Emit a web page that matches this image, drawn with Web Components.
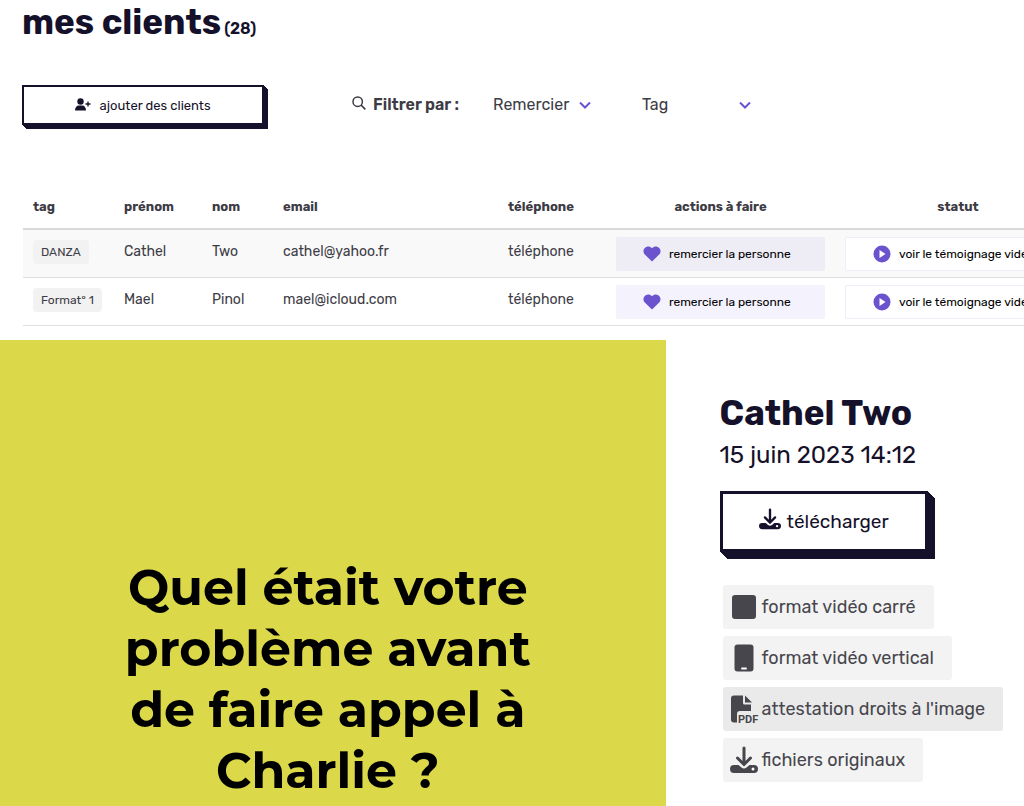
<!DOCTYPE html>
<html lang="fr">
<head>
<meta charset="utf-8">
<meta name="viewport" content="width=device-width, initial-scale=1">
<title>mes clients</title>
<style>
    body {
        --ink: #15112a;
        --text: #3d3c45;
        --violet: #6a53cc;
        margin: 0;
        background: white;
        color: var(--text);
        font-family: Rubik, Roboto, sans-serif;
    }
</style>
</head>
<body>
<clients-page></clients-page>

<script>
// all the icons, drawn with currentColor
const ICONS = {
    "user-plus": `<svg viewBox="0 0 16 14"><circle cx="5.500" cy="3.500" r="3.200" fill="currentColor"/><path d="M0 12.500c0-3 1.500-5 4-5h3c2.500 0 4 2 4 5z" fill="currentColor"/><path d="M13 3.500v5M10.500 6h5" stroke="currentColor" stroke-width="1.300" fill="none"/></svg>`,
    search: `<svg viewBox="0 0 14 14"><circle cx="5.700" cy="5.700" r="4.700" fill="none" stroke="currentColor" stroke-width="1.500"/><path d="M9 9l4.300 4.300" stroke="currentColor" stroke-width="1.700"/></svg>`,
    chevron: `<svg viewBox="0 0 12 8"><path d="M1 1.500l5 5 5-5" fill="none" stroke="currentColor" stroke-width="2"/></svg>`,
    heart: `<svg viewBox="0 0 18 16"><path d="M9 15.500L1.800 8.600C-2.500 3.500 4.500-2.500 9 2.200c4.500-4.700 11.500 1.300 7.200 6.400z" fill="currentColor"/></svg>`,
    play: `<svg viewBox="0 0 18 18"><circle cx="9" cy="9" r="8.500" fill="currentColor"/><path d="M6.500 5v8l6-4z" fill="white"/></svg>`,
    download: `<svg viewBox="0 0 28 28"><path d="M14 2v16M7.500 12l6.500 6.500 6.500-6.500" fill="none" stroke="currentColor" stroke-width="3" stroke-linecap="round"/><path d="M4 19h4.500l3 2.600q2.500 1.800 5 0l3-2.600H24a3.900 3.900 0 0 1 0 8H4a3.900 3.900 0 0 1 0-8z" fill="currentColor"/><circle cx="23" cy="23" r="1.500" fill="white"/></svg>`,
    square: `<svg viewBox="0 0 28 28"><rect x="2" y="2" width="24" height="24" rx="3" fill="currentColor"/></svg>`,
    phone: `<svg viewBox="0 0 28 28"><rect x="4.500" y="0.500" width="19" height="27" rx="3" fill="currentColor"/><path d="M12 24.500h4" stroke="white" stroke-width="1.800" stroke-linecap="round"/></svg>`,
    pdf: `<svg viewBox="0 0 28 28"><path d="M4 0.500h9V8q0 1.500 1.500 1.500H21V16H10q-3 0-3 3v8.500H4q-3 0-3-3v-21q0-3 3-3z" fill="currentColor"/><path d="M15 0.500v7h7z" fill="currentColor"/><text x="8" y="27.500" font-family="Roboto, sans-serif" font-size="11" font-weight="700" fill="currentColor">PDF</text></svg>`
};

const CLIENTS = [
    { tag: "DANZA", prenom: "Cathel", nom: "Two", email: "cathel@yahoo.fr" },
    { tag: "Format° 1", prenom: "Mael", nom: "Pinol", email: "mael@icloud.com" }
];

// <ui-icon name="..."> takes its size from --icon-size
class UiIcon extends HTMLElement {
    constructor() {
        super();
        this.attachShadow({ mode: "open" });
    }

    connectedCallback() {
        this.shadowRoot.innerHTML = `
        <style>
            :host {
                display: block;
                flex: none;
                width: var(--icon-size, 16px);
            }

            svg {
                display: block;
                width: 100%;
                overflow: visible;
            }
        </style>
        ${ICONS[this.getAttribute("name")] || ""}
        `;
    }
}

// <block-button> white button with a thick extruded edge
class BlockButton extends HTMLElement {
    constructor() {
        super();
        this.attachShadow({ mode: "open" });
        this.shadowRoot.innerHTML = `
        <style>
            :host {
                display: block;
            }

            button {
                display: flex;
                align-items: center;
                justify-content: center;
                gap: 8px;
                width: 100%;
                height: 40px;
                padding: 0;
                background: white;
                color: var(--ink);
                border: 2px solid var(--ink);
                font: 400 13px Rubik, Roboto, sans-serif;
                box-shadow: 1px 1px var(--ink), 2px 2px var(--ink), 3px 3px var(--ink), 4px 4px var(--ink);
            }

            :host([large]) button {
                height: 61px;
                gap: 6px;
                border-width: 3px;
                font-size: 19px;
                box-shadow: 1px 1px var(--ink), 2px 2px var(--ink), 3px 3px var(--ink), 4px 4px var(--ink),
                    5px 5px var(--ink), 6px 6px var(--ink), 7px 7px var(--ink);
            }
        </style>
        <button type="button"><slot name="icon"></slot><slot></slot></button>
        `;
    }
}

// <filter-select label="..."> drop-down with a violet chevron
class FilterSelect extends HTMLElement {
    constructor() {
        super();
        this.attachShadow({ mode: "open" });
    }

    connectedCallback() {
        const label = this.getAttribute("label");
        this.shadowRoot.innerHTML = `
        <style>
            :host {
                display: grid;
                grid-template-columns: 1fr 12px;
                align-items: center;
            }

            select {
                grid-area: 1 / 1 / 2 / 3;
                appearance: none;
                width: 100%;
                padding: 0;
                border: 0;
                background: none;
                color: var(--text);
                font: 400 16px/24px Rubik, Roboto, sans-serif;
            }

            ui-icon {
                --icon-size: 12px;
                grid-area: 1 / 2;
                color: var(--violet);
                pointer-events: none;
            }
        </style>
        <select aria-label="${label}"><option>${label}</option></select>
        <ui-icon name="chevron"></ui-icon>
        `;
    }
}

// <filter-bar> title and slot for the drop-downs
class FilterBar extends HTMLElement {
    constructor() {
        super();
        this.attachShadow({ mode: "open" });
        this.shadowRoot.innerHTML = `
        <style>
            :host {
                display: flex;
                align-items: center;
            }

            strong {
                margin: 0 34px 0 7px;
                font-size: 16px;
                font-weight: 600;
                line-height: 24px;
            }

            ui-icon {
                --icon-size: 14px;
                margin-bottom: 4px;
            }
        </style>
        <ui-icon name="search"></ui-icon>
        <strong>Filtrer par :</strong>
        <slot></slot>
        `;
    }
}

// <action-button> flat button used in the table cells
class ActionButton extends HTMLElement {
    constructor() {
        super();
        this.attachShadow({ mode: "open" });
        this.shadowRoot.innerHTML = `
        <style>
            :host {
                display: block;
            }

            button {
                display: flex;
                align-items: center;
                gap: 8px;
                width: 100%;
                height: 34px;
                padding: 0 26px;
                background: var(--action-bg, #f4f2fd);
                color: black;
                border: 1px solid transparent;
                border-radius: 2px;
                white-space: nowrap;
                font: 400 12px Rubik, Roboto, sans-serif;
            }

            :host([outline]) button {
                padding: 0 27px;
                background: white;
                border-color: #f0edfb;
            }

            ::slotted(ui-icon) {
                --icon-size: 18px;
                color: var(--violet);
            }
        </style>
        <button type="button"><slot name="icon"></slot><slot></slot></button>
        `;
    }
}

class ClientsTable extends HTMLElement {
    constructor() {
        super();
        this.attachShadow({ mode: "open" });
        this.render();
    }

    renderRow(client) {
        return `
        <tr>
            <td><span class="tag">${client.tag}</span></td>
            <td>${client.prenom}</td>
            <td>${client.nom}</td>
            <td>${client.email}</td>
            <td>téléphone</td>
            <td class="action"><action-button><ui-icon slot="icon" name="heart"></ui-icon>remercier la personne</action-button></td>
            <td class="action"><action-button outline><ui-icon slot="icon" name="play"></ui-icon>voir le témoignage vidéo</action-button></td>
        </tr>`;
    }

    render() {
        this.shadowRoot.innerHTML = `
        <style>
            :host {
                display: block;
                overflow: hidden;
            }

            table {
                width: 1058px;
                table-layout: fixed;
                border-collapse: separate;
                border-spacing: 0;
                text-align: left;
                font-size: 14px;
                line-height: 20px;
            }

            th {
                padding: 0 10px 11px;
                border-bottom: 2px solid #d9d9d9;
                font-size: 13px;
                font-weight: 700;
            }

            th.center {
                text-align: center;
            }

            td {
                height: 43px;
                padding: 0 10px 4px;
                border-bottom: 1px solid #e0e0e0;
            }

            td.action {
                height: 47px;
                padding: 0 10px;
            }

            tbody tr:first-child {
                --action-bg: #eeecf5;
                background: #f9f9f9;
            }

            .tag {
                display: inline-block;
                padding: 2px 8px;
                border-radius: 4px;
                background: #f2f2f2;
                font-size: 12px;
            }
        </style>
        <table>
            <colgroup>
                <col style="width: 91px"><col style="width: 88px"><col style="width: 71px"><col style="width: 225px">
                <col style="width: 108px"><col style="width: 229px"><col>
            </colgroup>
            <thead>
                <tr>
                    <th>tag</th><th>prénom</th><th>nom</th><th>email</th><th>téléphone</th>
                    <th class="center">actions à faire</th><th class="center">statut</th>
                </tr>
            </thead>
            <tbody>${CLIENTS.map(c => this.renderRow(c)).join("")}</tbody>
        </table>
        `;
    }
}

// <video-panel> yellow title card of the testimony
class VideoPanel extends HTMLElement {
    constructor() {
        super();
        this.attachShadow({ mode: "open" });
        this.shadowRoot.innerHTML = `
        <style>
            :host {
                display: flex;
                flex-direction: column;
                justify-content: flex-end;
                align-items: center;
                box-sizing: border-box;
                padding: 24px 10px 5px 0;
                background: #dbd84a;
                color: black;
            }

            p {
                max-width: 440px;
                margin: 0;
                text-align: center;
                font: 700 49px/61px Montserrat, Inter, sans-serif;
            }
        </style>
        <p><slot></slot></p>
        `;
    }
}

// <file-chip icon="..."> link to one of the files
class FileChip extends HTMLElement {
    constructor() {
        super();
        this.attachShadow({ mode: "open" });
    }

    connectedCallback() {
        this.shadowRoot.innerHTML = `
        <style>
            :host {
                display: block;
            }

            a {
                display: flex;
                align-items: center;
                gap: 4px;
                height: 44px;
                padding: 0 18px 0 7px;
                border-radius: 3px;
                background: var(--chip-bg, #f3f3f3);
                color: #47464d;
                font-size: 18px;
                text-decoration: none;
                white-space: nowrap;
            }

            ui-icon {
                --icon-size: 28px;
            }
        </style>
        <a href="#"><ui-icon name="${this.getAttribute("icon")}"></ui-icon><slot></slot></a>
        `;
    }
}

class ClientDetail extends HTMLElement {
    constructor() {
        super();
        this.attachShadow({ mode: "open" });
        this.shadowRoot.innerHTML = `
        <style>
            :host {
                display: block;
                padding: 50px 20px 20px 54px;
            }

            h2 {
                margin: 0;
                color: var(--ink);
                font-size: 35px;
                font-weight: 700;
                line-height: 47px;
            }

            p {
                margin: 0 0 18px;
                color: var(--ink);
                font-size: 24px;
                line-height: 36px;
            }

            block-button {
                width: 208px;
            }

            block-button ui-icon {
                --icon-size: 22px;
                margin-bottom: 6px;
            }

            nav {
                display: flex;
                flex-direction: column;
                align-items: flex-start;
                gap: 7px;
                margin: 33px 0 0 3px;
            }

            .active {
                --chip-bg: #eaeaea;
            }
        </style>
        <h2>Cathel Two</h2>
        <p>15 juin 2023 14:12</p>
        <block-button large><ui-icon slot="icon" name="download"></ui-icon>télécharger</block-button>
        <nav>
            <file-chip icon="square">format vidéo carré</file-chip>
            <file-chip icon="phone">format vidéo vertical</file-chip>
            <file-chip icon="pdf" class="active">attestation droits à l'image</file-chip>
            <file-chip icon="download">fichiers originaux</file-chip>
        </nav>
        `;
    }
}

class ClientsPage extends HTMLElement {
    constructor() {
        super();
        this.attachShadow({ mode: "open" });
        this.shadowRoot.innerHTML = `
        <style>
            :host {
                display: flex;
                flex-direction: column;
                min-height: 100vh;
            }

            header {
                padding-left: 22px;
            }

            h1 {
                display: flex;
                align-items: baseline;
                gap: 3px;
                margin: 0;
                color: var(--ink);
                font-size: 35px;
                font-weight: 700;
                line-height: 44px;
            }

            h1 small {
                font-size: 16px;
                font-weight: 600;
            }

            .tools {
                display: flex;
                align-items: center;
                gap: 88px;
                margin-top: 34px;
            }

            .tools block-button {
                width: 242px;
            }

            .remercier {
                width: 98px;
                margin-right: 51px;
            }

            .tag {
                width: 109px;
            }

            clients-table {
                margin: 72px 0 0 23px;
            }

            main {
                display: grid;
                grid-template-columns: 65% 1fr;
                flex: 1;
                margin-top: 14px;
            }
        </style>
        <header>
            <h1>mes clients <small>(28)</small></h1>
            <div class="tools">
                <block-button><ui-icon slot="icon" name="user-plus"></ui-icon>ajouter des clients</block-button>
                <filter-bar>
                    <filter-select class="remercier" label="Remercier"></filter-select>
                    <filter-select class="tag" label="Tag"></filter-select>
                </filter-bar>
            </div>
        </header>
        <clients-table></clients-table>
        <main>
            <video-panel>Quel était votre problème avant de faire appel à Charlie ?</video-panel>
            <client-detail></client-detail>
        </main>
        `;
    }
}

customElements.define("ui-icon", UiIcon);
customElements.define("block-button", BlockButton);
customElements.define("filter-select", FilterSelect);
customElements.define("filter-bar", FilterBar);
customElements.define("action-button", ActionButton);
customElements.define("clients-table", ClientsTable);
customElements.define("video-panel", VideoPanel);
customElements.define("file-chip", FileChip);
customElements.define("client-detail", ClientDetail);
customElements.define("clients-page", ClientsPage);
</script>
</body>
</html>
